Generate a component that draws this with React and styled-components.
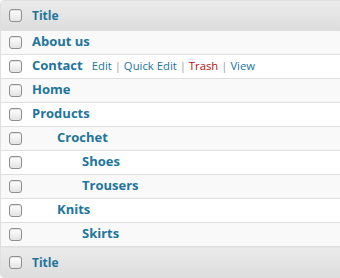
import React from "react";
import styled, { createGlobalStyle } from "styled-components";

const GlobalStyle = createGlobalStyle`
  html, body {
    margin: 0;
    padding: 0;
    background: #ffffff;
  }
  body {
    font-family: "Open Sans", "Liberation Sans", sans-serif;
  }
`;

const PagesTable = styled.div`
  width: 345px;
  border: 1px solid #dfdfdf;
  border-radius: 4px;
  overflow: hidden;
  background: #f9f9f9;
`;

const HeadRow = styled.div`
  display: flex;
  align-items: center;
  height: 29px;
  background: linear-gradient(to bottom, #ebebeb, #dddddd);
  border-bottom: ${(p) => (p.$foot ? "none" : "1px solid #dfdfdf")};
  border-top: ${(p) => (p.$foot ? "1px solid #e4e4e4" : "none")};
`;

const Row = styled.div`
  display: flex;
  align-items: center;
  height: 23px;
  background: ${(p) => (p.$alt ? "#f9f9f9" : "#ffffff")};
  border-bottom: 1px solid #dfdfdf;
`;

const CheckCell = styled.div`
  width: 31px;
  flex: none;
  display: flex;
  align-items: center;
  padding-left: 8px;
  box-sizing: border-box;
`;

const Check = styled.span`
  display: block;
  width: 13px;
  height: 13px;
  box-sizing: border-box;
  border: 1px solid #8f8f8f;
  border-radius: 3px;
  background: linear-gradient(to bottom, #ffffff, #e4e4e4);
  box-shadow: inset 0 1px 1px rgba(0, 0, 0, 0.12);
`;

const HeadTitle = styled.span`
  font-size: 12px;
  font-weight: 700;
  color: #21759b;
  margin-top: -1px;
`;

const TitleCell = styled.div`
  display: flex;
  align-items: baseline;
  padding-left: ${(p) => p.$level * 25}px;
  padding-bottom: 3px;
  white-space: nowrap;
`;

const RowTitle = styled.span`
  font-size: 13px;
  font-weight: 700;
  color: #21759b;
`;

const Actions = styled.span`
  margin-left: 9px;
  font-size: 11.3px;
  color: #a0a0a0;
`;

const Action = styled.span`
  color: ${(p) => (p.$danger ? "#bc0b0b" : "#21759b")};
`;

const pages = [
  { title: "About us", level: 0 },
  { title: "Contact", level: 0, actions: true },
  { title: "Home", level: 0 },
  { title: "Products", level: 0 },
  { title: "Crochet", level: 1 },
  { title: "Shoes", level: 2 },
  { title: "Trousers", level: 2 },
  { title: "Knits", level: 1 },
  { title: "Skirts", level: 2 },
];

function App() {
  return (
    <>
      <GlobalStyle />
      <PagesTable>
        <HeadRow>
          <CheckCell>
            <Check />
          </CheckCell>
          <HeadTitle>Title</HeadTitle>
        </HeadRow>
        {pages.map((page, i) => (
          <Row key={page.title} $alt={i % 2 === 0}>
            <CheckCell>
              <Check />
            </CheckCell>
            <TitleCell $level={page.level}>
              <RowTitle>{page.title}</RowTitle>
              {page.actions && (
                <Actions>
                  <Action>Edit</Action> | <Action>Quick Edit</Action> |{" "}
                  <Action $danger>Trash</Action> | <Action>View</Action>
                </Actions>
              )}
            </TitleCell>
          </Row>
        ))}
        <HeadRow $foot>
          <CheckCell>
            <Check />
          </CheckCell>
          <HeadTitle>Title</HeadTitle>
        </HeadRow>
      </PagesTable>
    </>
  );
}

export default App;
